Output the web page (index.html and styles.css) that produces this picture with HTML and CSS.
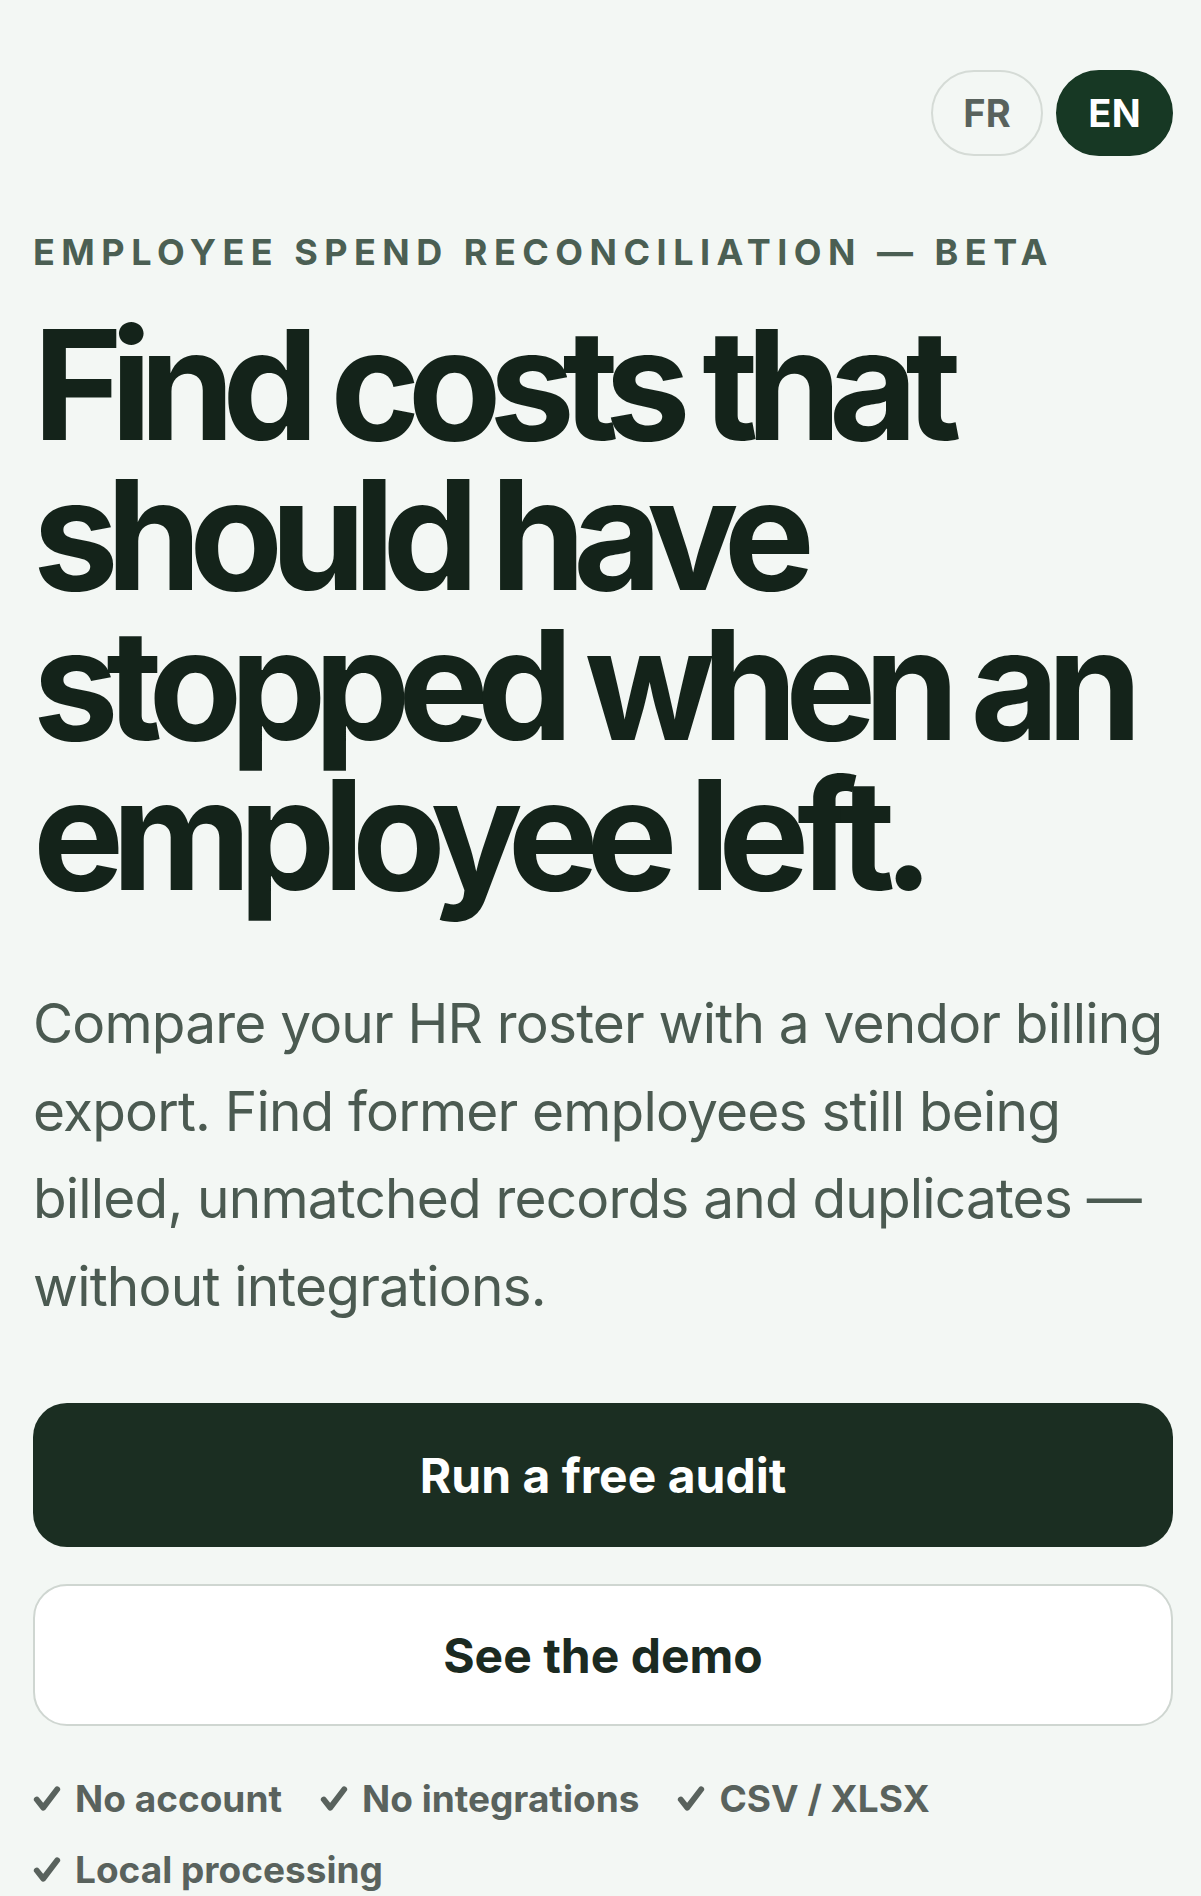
FILE: index.html
```html
<!DOCTYPE html>
<html lang="en">
<head>
<meta charset="utf-8">
<title>Employee spend reconciliation</title>
<link rel="stylesheet" href="styles.css">
</head>
<body>
<main class="page">
  <nav class="lang">
    <button class="lang-btn">FR</button>
    <button class="lang-btn lang-btn--active">EN</button>
  </nav>
  <p class="eyebrow">Employee spend reconciliation — Beta</p>
  <h1 class="headline">Find costs that should have stopped when an employee left.</h1>
  <p class="lead">Compare your HR roster with a vendor billing export. Find former employees still being billed, unmatched records and duplicates — without integrations.</p>
  <div class="actions">
    <a class="btn btn--primary" href="#">Run a free audit</a>
    <a class="btn btn--secondary" href="#">See the demo</a>
  </div>
  <ul class="features">
    <li class="feature"><svg class="check" viewBox="0 0 26 26" aria-hidden="true"><path d="M3.5 13.5 L9.5 21 L22.5 4"/></svg>No account</li>
    <li class="feature"><svg class="check" viewBox="0 0 26 26" aria-hidden="true"><path d="M3.5 13.5 L9.5 21 L22.5 4"/></svg>No integrations</li>
    <li class="feature"><svg class="check" viewBox="0 0 26 26" aria-hidden="true"><path d="M3.5 13.5 L9.5 21 L22.5 4"/></svg>CSV / XLSX</li>
    <li class="feature"><svg class="check" viewBox="0 0 26 26" aria-hidden="true"><path d="M3.5 13.5 L9.5 21 L22.5 4"/></svg>Local processing</li>
  </ul>
</main>
</body>
</html>
```

FILE: styles.css
```css
* { box-sizing: border-box; }
html, body {
  margin: 0;
  padding: 0;
  background: #f3f7f4;
}
body {
  font-family: Inter, "Liberation Sans", sans-serif;
  color: #14231a;
}
.page {
  padding: 70px 28px 0 33px;
}
.lang {
  display: flex;
  justify-content: flex-end;
  gap: 13px;
}
.lang-btn {
  height: 86px;
  padding: 0 30px;
  border-radius: 43px;
  border: 2px solid #d5dbd6;
  background: transparent;
  color: #59625d;
  font-family: Inter, "Liberation Sans", sans-serif;
  font-weight: 700;
  font-size: 38px;
  letter-spacing: 0.01em;
}
.lang-btn--active {
  background: #173824;
  border-color: #173824;
  color: #ffffff;
}
.eyebrow {
  margin: 74px 0 0;
  font-size: 36px;
  line-height: 44px;
  font-weight: 700;
  text-transform: uppercase;
  letter-spacing: 0.18em;
  color: #4b5f53;
}
.headline {
  margin: 36px 0 0;
  font-size: 153px;
  line-height: 150px;
  font-weight: 700;
  letter-spacing: -0.081em;
  color: #14231a;
}
.lead {
  margin: 70px 0 0;
  font-size: 55px;
  line-height: 87.5px;
  font-weight: 400;
  letter-spacing: -0.015em;
  color: #4b5a51;
}
.actions {
  margin-top: 73px;
  display: flex;
  flex-direction: column;
  gap: 37px;
}
.btn {
  display: flex;
  align-items: center;
  justify-content: center;
  height: 144px;
  border-radius: 34px;
  text-decoration: none;
  font-size: 48px;
  font-weight: 700;
  letter-spacing: 0;
}
.btn--primary {
  background: #1b2e22;
  color: #ffffff;
}
.btn--secondary {
  height: 142px;
  background: #ffffff;
  border: 2px solid #cfd6d1;
  color: #1b2a21;
}
.features {
  list-style: none;
  margin: 37px 0 0;
  padding: 0;
  display: flex;
  flex-wrap: wrap;
  column-gap: 38px;
  font-size: 37px;
  line-height: 71px;
  font-weight: 700;
  color: #59625d;
}
.feature {
  display: flex;
  align-items: center;
}
.check {
  width: 28px;
  height: 28px;
  margin-right: 14px;
  fill: none;
  stroke: #59625d;
  stroke-width: 5.4;
  stroke-linecap: round;
  stroke-linejoin: round;
}
```
